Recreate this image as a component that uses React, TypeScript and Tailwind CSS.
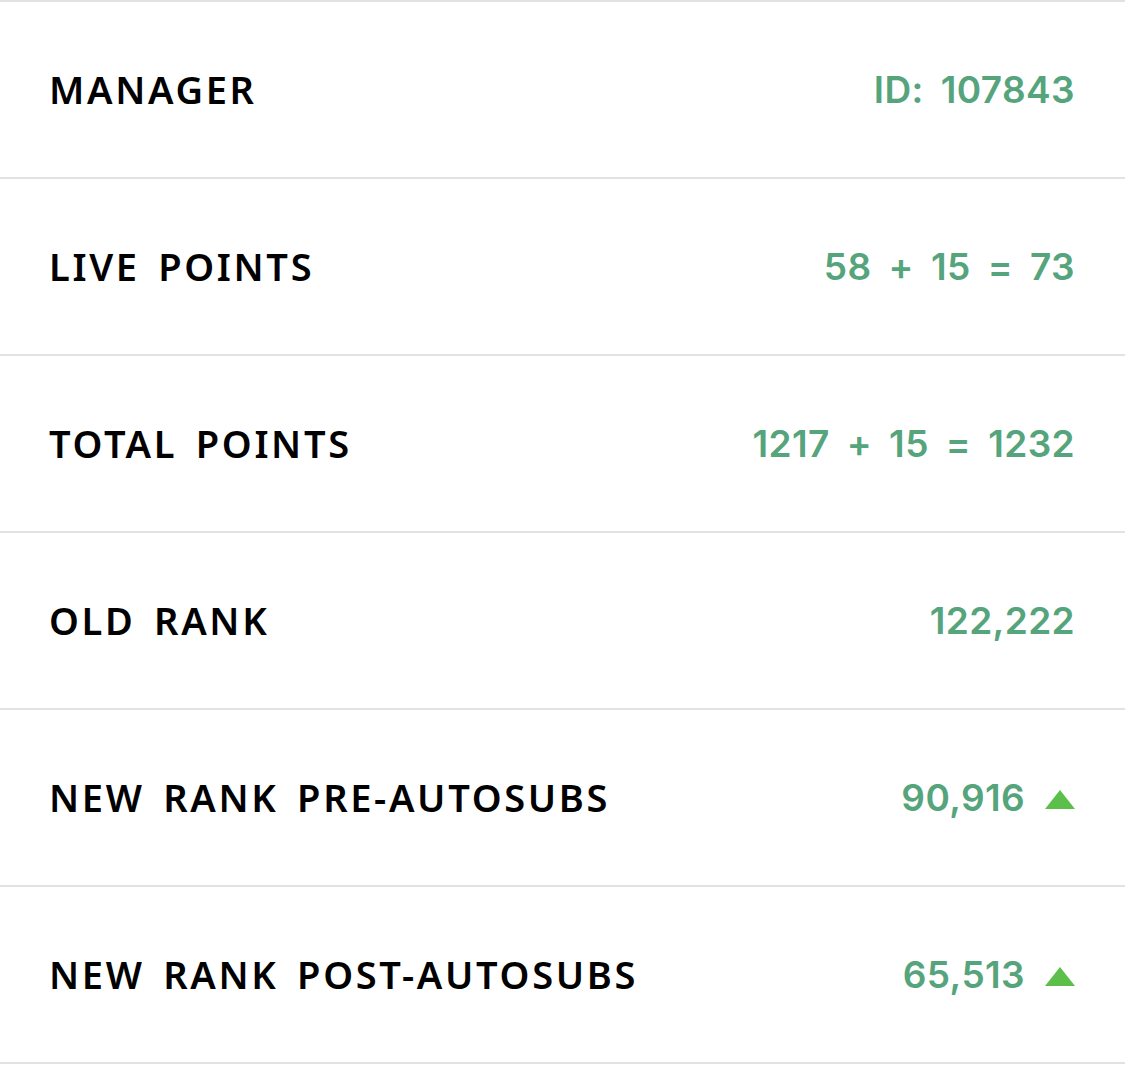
const rows: { label: string; value: string; up?: boolean }[] = [
  { label: "MANAGER", value: "ID: 107843" },
  { label: "LIVE POINTS", value: "58 + 15 = 73" },
  { label: "TOTAL POINTS", value: "1217 + 15 = 1232" },
  { label: "OLD RANK", value: "122,222" },
  { label: "NEW RANK PRE-AUTOSUBS", value: "90,916", up: true },
  { label: "NEW RANK POST-AUTOSUBS", value: "65,513", up: true },
];

function UpArrow() {
  return (
    <svg width="30" height="19" viewBox="0 0 30 19" className="ml-[20px] mt-[4px]">
      <polygon points="15,0 30,19 0,19" fill="#5cbf4a" />
    </svg>
  );
}

export default function App() {
  return (
    <div
      className="w-[1125px] h-[1065px] bg-white border-t-2 border-[#e2e2e2]"
      style={{ fontFamily: '"Noto Sans", "Open Sans", sans-serif' }}
    >
      {rows.map((r) => (
        <div
          key={r.label}
          className="h-[177px] flex items-center justify-between pl-[49px] pr-[50px] border-b-2 border-[#e2e2e2]"
        >
          <span className="text-[38px] font-semibold tracking-[0.07em] [word-spacing:0.16em] text-black">
            {r.label}
          </span>
          <span className="flex items-center font-['Inter',sans-serif] text-[37px] font-semibold tracking-[0.01em] [word-spacing:0.2em] text-[#55a47c]">
            {r.value}
            {r.up && <UpArrow />}
          </span>
        </div>
      ))}
    </div>
  );
}
